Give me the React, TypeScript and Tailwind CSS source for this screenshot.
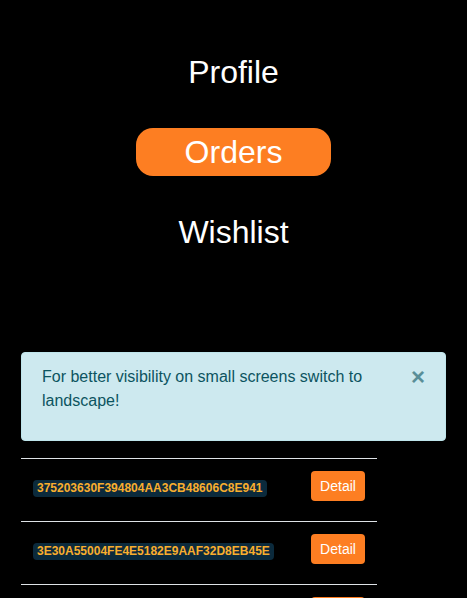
import React from "react";

const orders = [
  "375203630F394804AA3CB48606C8E941",
  "3E30A55004FE4E5182E9AAF32D8EB45E",
  "8A1C0B7D2E4F4A6B9C3D5E7F1A2B3C4D",
];

export default function App() {
  return (
    <div className="h-[598px] overflow-hidden bg-black font-['Liberation_Sans',Arial,Helvetica,sans-serif]">
      <nav className="flex flex-col items-center gap-8 pt-12">
        <a className="px-12 text-[32px] leading-[48px] text-white">Profile</a>
        <a className="rounded-[17px] bg-[#fd7e22] px-[49px] text-[32px] leading-[48px] text-white">Orders</a>
        <a className="px-12 text-[32px] leading-[48px] text-white">Wishlist</a>
      </nav>

      <div className="mt-24 px-[21px]">
        <div className="relative rounded-[4px] border border-[#bee5eb] bg-[#cde9ef] pb-[27px] pl-5 pr-16 pt-3 text-[16px] leading-6 text-[#0c5460]">
          For better visibility on small screens switch to landscape!
          <span className="absolute right-0 top-0 px-5 pt-3 text-[24px] font-bold leading-6 text-[#0c5460] opacity-60">
            ×
          </span>
        </div>
      </div>

      <div className="ml-[21px] mt-[17px] w-[356px]">
        {orders.map((id) => (
          <div key={id} className="flex h-[63px] items-start justify-between border-t border-[#dee2e6]">
            <div className="pl-3 pt-4">
              <span className="inline-block h-[17px] rounded-[4px] bg-[#0b2a3c] px-1 text-[12px] font-bold leading-[17px] text-[#f9ae2e]">
                {id}
              </span>
            </div>
            <div className="pr-3 pt-3">
              <button className="flex h-[30px] w-[54px] items-center justify-center rounded-[4px] bg-[#fd7e22] text-[14px] text-white">
                Detail
              </button>
            </div>
          </div>
        ))}
      </div>
    </div>
  );
}
